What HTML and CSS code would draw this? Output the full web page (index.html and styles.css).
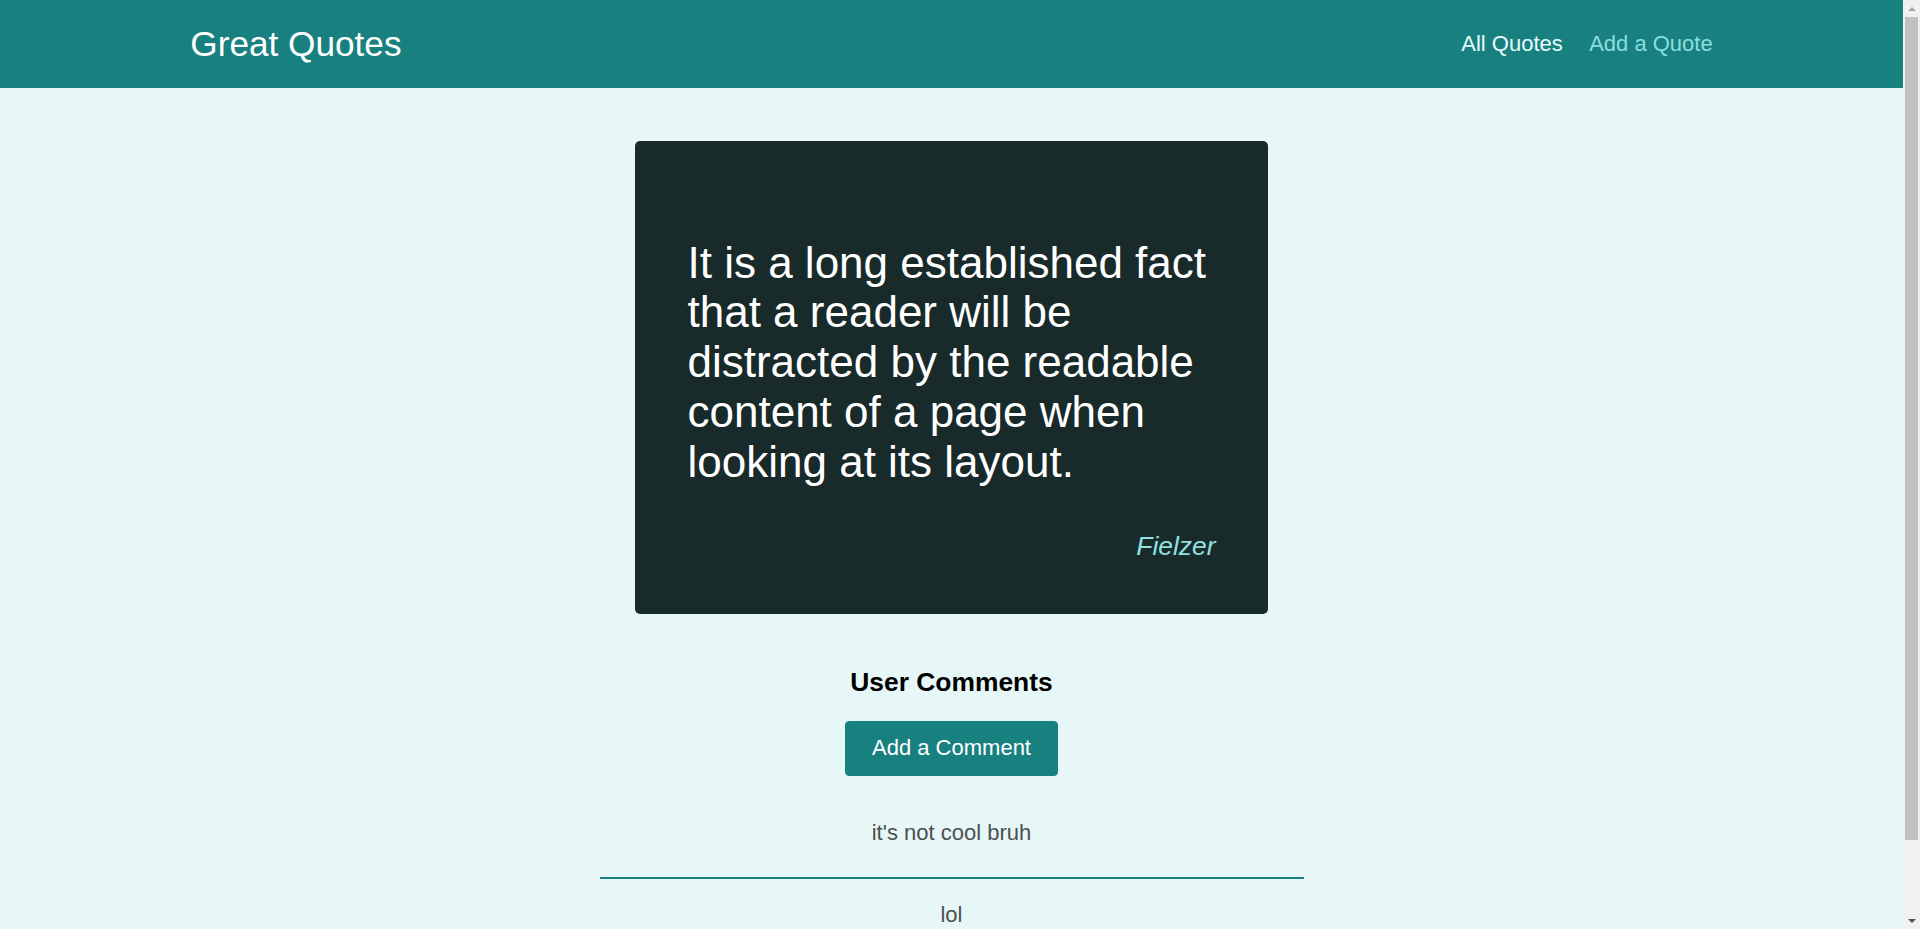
FILE: index.html
```html
<!DOCTYPE html>
<html lang="en">
<head>
<meta charset="utf-8">
<title>Great Quotes</title>
<link rel="stylesheet" href="styles.css">
</head>
<body>
<div class="page">
  <header class="header">
    <div class="logo">Great Quotes</div>
    <nav class="nav">
      <ul class="nav-list">
        <li class="nav-item"><a class="nav-link active" href="#">All Quotes</a></li>
        <li class="nav-item"><a class="nav-link" href="#">Add a Quote</a></li>
      </ul>
    </nav>
  </header>
  <main class="main">
    <figure class="quote">
      <p class="quote-text">It is a long established fact that a reader will be distracted by the readable content of a page when looking at its layout.</p>
      <figcaption class="quote-author">Fielzer</figcaption>
    </figure>
    <section class="comments">
      <h2 class="comments-title">User Comments</h2>
      <button class="btn" type="button">Add a Comment</button>
      <ul class="comment-list">
        <li class="comment-item"><p class="comment-text">it's not cool bruh</p></li>
        <li class="comment-item"><p class="comment-text">lol</p></li>
      </ul>
    </section>
  </main>
</div>
<div class="scrollbar" aria-hidden="true">
  <div class="sb-btn sb-up"></div>
  <div class="sb-track"><div class="sb-thumb"></div></div>
  <div class="sb-btn sb-down"></div>
</div>
</body>
</html>
```
FILE: styles.css
```css
* {
  box-sizing: border-box;
}

html {
  font-family: "Liberation Sans", Arial, sans-serif;
}

body {
  margin: 0;
  background-color: #e7f7f7;
}

.page {
  margin-right: 17px;
}

.header {
  width: 100%;
  height: 88px;
  display: flex;
  align-items: center;
  justify-content: space-between;
  background-color: #198080;
  padding: 0 10%;
}

.logo {
  font-size: 35.2px;
  color: #ffffff;
}

.nav-list {
  list-style: none;
  margin: 0;
  padding: 0;
  display: flex;
  align-items: baseline;
}

.nav-item {
  margin-left: 26.4px;
}

.nav-link {
  text-decoration: none;
  font-size: 22px;
  color: #88dfdf;
}

.nav-link.active {
  color: #e6fcfc;
}

.main {
  margin: 52.8px auto;
  width: 90%;
  max-width: 704px;
}

.quote {
  background-color: #192a2a;
  border-radius: 5px;
  padding: 52.8px;
  margin: 52.8px auto;
  width: 90%;
}

.quote-text {
  font-size: 44px;
  line-height: 49.8px;
  color: #ffffff;
  margin: 44px 0;
}

.quote-author {
  font-style: italic;
  font-size: 26.4px;
  text-align: right;
  color: #90e0e0;
}

.comments {
  text-align: center;
}

.comments-title {
  font-size: 26.4px;
  margin: 21.9px 0 23px;
  color: #000000;
}

.btn {
  font: inherit;
  font-size: 22px;
  cursor: pointer;
  padding: 13.2px 26.4px;
  border-radius: 4px;
  background-color: #198080;
  color: #ffffff;
  border: 1px solid #198080;
}

.comment-list {
  list-style: none;
  margin: 0;
  padding: 21.5px 0 50px;
}

.comment-item {
  margin-top: 23px;
  padding-bottom: 31px;
  border-bottom: 2px solid #198080;
}

.comment-text {
  margin: 0;
  font-size: 22px;
  color: #4b5050;
}

/* imitation of the browser's classic scrollbar */
.scrollbar {
  position: fixed;
  top: 0;
  right: 0;
  width: 17px;
  height: 100vh;
  background-color: #f1f1f1;
  display: flex;
  flex-direction: column;
}

.sb-btn {
  height: 17px;
  flex: none;
  display: flex;
  align-items: center;
  justify-content: center;
}

.sb-up::before {
  content: "";
  border-left: 4px solid transparent;
  border-right: 4px solid transparent;
  border-bottom: 4px solid #a3a3a3;
}

.sb-down::before {
  content: "";
  border-left: 4px solid transparent;
  border-right: 4px solid transparent;
  border-top: 4px solid #505050;
}

.sb-track {
  flex: 1;
  padding: 0 2px;
}

.sb-thumb {
  height: 823px;
  background-color: #c1c1c1;
}
```
